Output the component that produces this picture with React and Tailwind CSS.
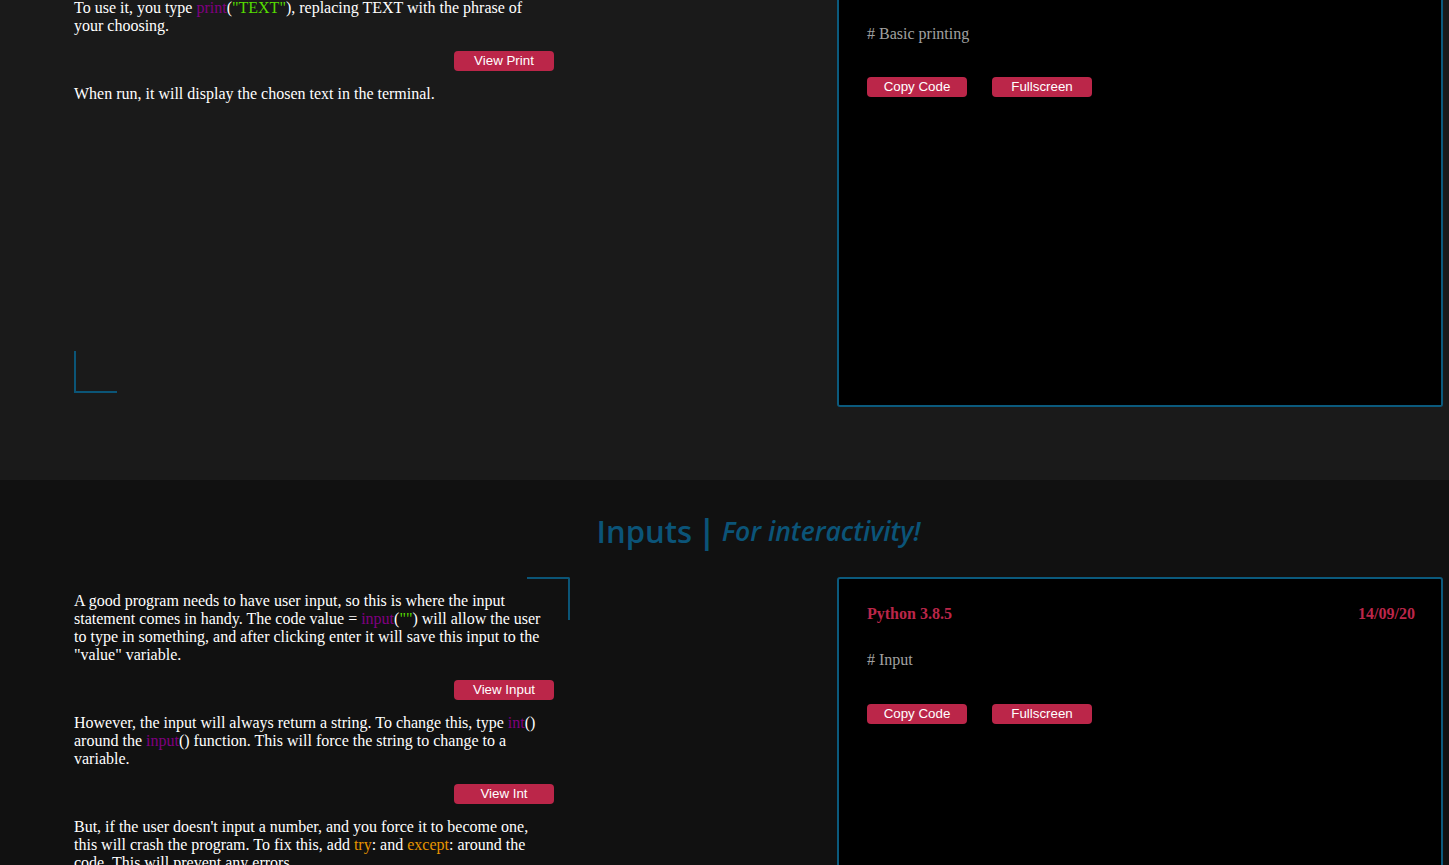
import React from "react";

const Btn = ({ children }) => (
    <button className="w-[100px] h-[20px] rounded-[4px] bg-[#bb2649] text-white text-[13.33px] leading-[20px] font-['Liberation_Sans',Arial,sans-serif]">
        {children}
    </button>
);

const Kw = ({ children }) => <span className="text-[#800080]">{children}</span>;
const Str = ({ children }) => <span className="text-[#55dd00]">{children}</span>;
const Orange = ({ children }) => <span className="text-[#e69500]">{children}</span>;

const CodeBox = ({ comment, showHeader, className }) => (
    <div className={"w-[606px] bg-black border-[#0b5a7d] px-[28px] " + className}>
        {showHeader && (
            <div className="pt-[26px] flex justify-between font-bold text-[#bb2649] leading-[18px]">
                <span>Python 3.8.5</span>
                <span className="mr-[-2px]">14/09/20</span>
            </div>
        )}
        <p className={(showHeader ? "mt-[28px]" : "pt-[25px]") + " text-[#a0a0a0] leading-[18px]"}>{comment}</p>
        <div className={(showHeader ? "mt-[35px]" : "mt-[34px]") + " flex gap-[25px]"}>
            <Btn>Copy Code</Btn>
            <Btn>Fullscreen</Btn>
        </div>
    </div>
);

export default function App() {
    return (
        <div className="min-h-screen bg-[#111111] text-white text-[16px] leading-[18px] font-['Liberation_Serif','Times_New_Roman',serif]">
            {/* print section (scrolled, top cut off) */}
            <section className="h-[480px] bg-[#1a1a1a] flex items-start">
                <div className="relative ml-[74px] w-[496px] h-[393px]">
                    <div className="w-[480px] -mt-px">
                        <p>
                            To use it, you type <Kw>print</Kw>(<Str>"TEXT"</Str>), replacing TEXT with the phrase of your choosing.
                        </p>
                        <div className="mt-4 flex justify-end">
                            <Btn>View Print</Btn>
                        </div>
                        <p className="mt-[14px]">When run, it will display the chosen text in the terminal.</p>
                    </div>
                    <span className="absolute left-0 bottom-0 w-[43px] h-[42px] border-l-2 border-b-2 border-[#0b5577]" />
                </div>
                <CodeBox
                    comment="# Basic printing"
                    className="ml-auto mr-[6px] h-[407px] border-2 border-t-0 rounded-b-[3px]"
                />
            </section>

            {/* inputs section */}
            <section className="pt-[31px] bg-[#111111]">
                <h2 className="h-[40px] pl-[68px] flex items-center justify-center gap-[6px] text-[#0b5478] font-['Open_Sans',sans-serif] leading-[40px]">
                    <span className="text-[31px] font-semibold">Inputs</span>
                    <span className="text-[32px] font-bold">|</span>
                    <span className="text-[26.5px] font-semibold italic">For interactivity!</span>
                </h2>
                <div className="mt-[26px] flex items-start">
                    <div className="relative ml-[74px] w-[496px] pt-[15px]">
                        <span className="absolute right-0 top-0 w-[43px] h-[43px] border-t-2 border-r-2 border-[#0b5577] rounded-tr-[2px]" />
                        <div className="w-[480px]">
                            <p>
                                A good program needs to have user input, so this is where the input statement comes in handy. The code value = <Kw>input</Kw>(<Str>""</Str>) will allow the user to type in something, and after clicking enter it will save this input to the "value" variable.
                            </p>
                            <div className="mt-4 flex justify-end">
                                <Btn>View Input</Btn>
                            </div>
                            <p className="mt-[14px]">
                                However, the input will always return a string. To change this, type <Kw>int</Kw>() around the <Kw>input</Kw>() function. This will force the string to change to a variable.
                            </p>
                            <div className="mt-4 flex justify-end">
                                <Btn>View Int</Btn>
                            </div>
                            <p className="mt-[14px]">
                                But, if the user doesn't input a number, and you force it to become one, this will crash the program. To fix this, add <Orange>try</Orange>: and <Orange>except</Orange>: around the code. This will prevent any errors.
                            </p>
                        </div>
                    </div>
                    <CodeBox
                        comment="# Input"
                        showHeader
                        className="ml-auto mr-[6px] h-[456px] border-2 rounded-[3px]"
                    />
                </div>
            </section>
        </div>
    );
}
